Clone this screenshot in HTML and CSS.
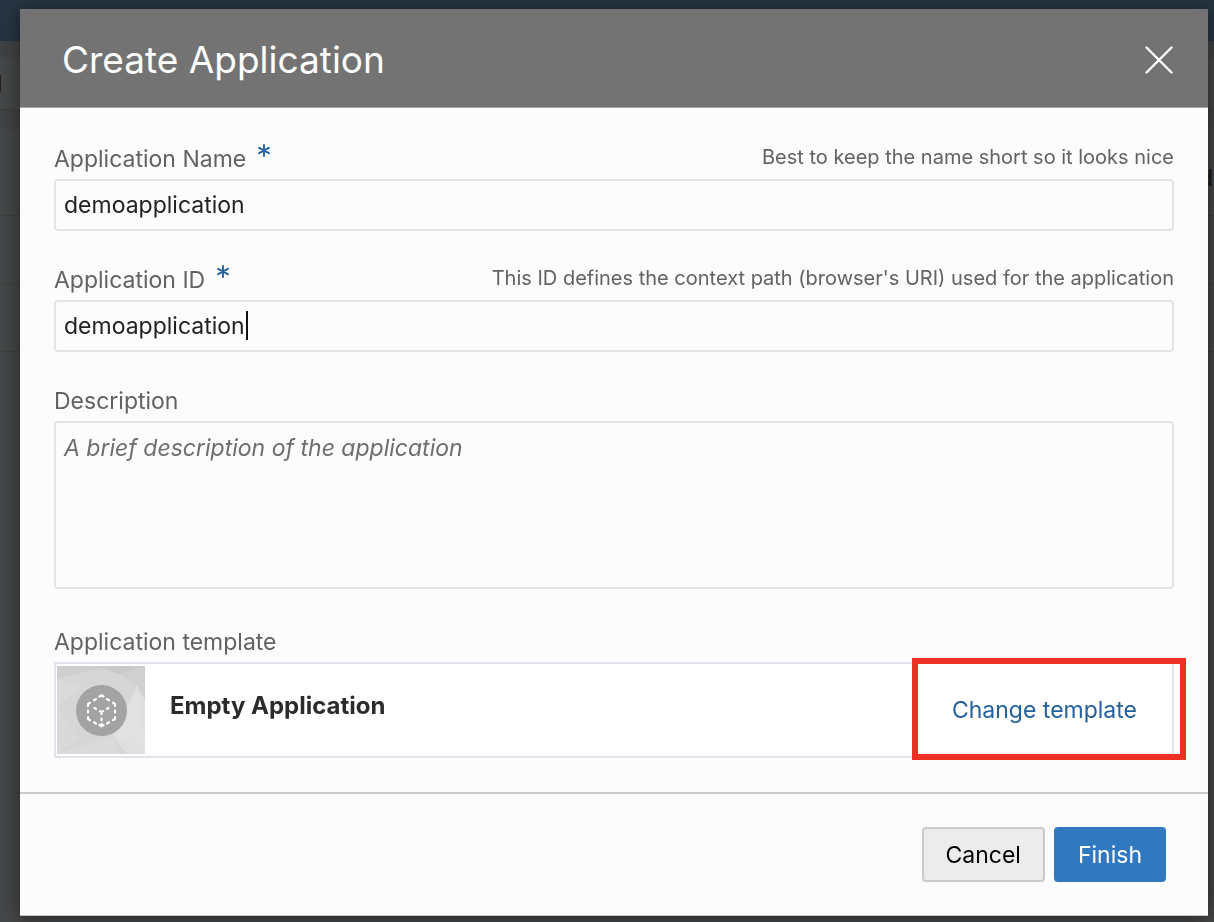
FILE: index.html
```html
<!DOCTYPE html>
<html lang="en">
<head>
<meta charset="utf-8">
<title>Create Application</title>
<link rel="stylesheet" href="styles.css">
</head>
<body>
<div class="backdrop" aria-hidden="true">
  <div class="backdrop-nav"></div>
  <div class="backdrop-toolbar"><span class="backdrop-mark"></span></div>
  <div class="backdrop-strip"></div>
  <div class="backdrop-head">d</div>
  <div class="backdrop-row"></div>
  <div class="backdrop-row"></div>
</div>
<main class="stage">
  <form class="dialog" role="dialog" aria-labelledby="dialog-title">
    <header class="dialog-header">
      <h1 class="dialog-title" id="dialog-title">Create Application</h1>
      <button class="close" type="button" aria-label="Close">
        <svg width="28" height="28" viewBox="0 0 28 28" fill="none" stroke="#fff" stroke-width="2.4" stroke-linecap="round"><path d="M1.5 1.5 26.5 26.5M26.5 1.5 1.5 26.5"/></svg>
      </button>
    </header>
    <div class="dialog-body">
      <div class="field">
        <div class="label-row">
          <label class="label" for="app-name">Application Name</label><span class="required"><svg width="12" height="13" viewBox="0 0 12 13" stroke="#23639f" stroke-width="1.9" stroke-linecap="round"><path d="M6 1v11M1.2 3.8l9.6 5.4M10.8 3.8 1.2 9.2"/></svg></span>
          <span class="hint">Best to keep the name short so it looks nice</span>
        </div>
        <input class="control" id="app-name" type="text" value="demoapplication">
      </div>
      <div class="field">
        <div class="label-row">
          <label class="label" for="app-id">Application ID</label><span class="required"><svg width="12" height="13" viewBox="0 0 12 13" stroke="#23639f" stroke-width="1.9" stroke-linecap="round"><path d="M6 1v11M1.2 3.8l9.6 5.4M10.8 3.8 1.2 9.2"/></svg></span>
          <span class="hint">This ID defines the context path (browser's URI) used for the application</span>
        </div>
        <div class="control-wrap">
          <input class="control" id="app-id" type="text" value="demoapplication">
          <span class="caret"></span>
        </div>
      </div>
      <div class="field">
        <div class="label-row"><label class="label" for="app-desc">Description</label></div>
        <textarea class="control control-area" id="app-desc" placeholder="A brief description of the application"></textarea>
      </div>
      <div class="field field-template">
        <div class="label-row"><span class="label">Application template</span></div>
        <div class="template">
          <svg class="thumb" width="88" height="88" viewBox="0 0 88 88">
            <path fill="#d6d6d6" d="M0 0h88v88H0z"/>
            <path fill="#cecece" d="M0 0h52L0 13z"/>
            <path fill="#c9c9c9" d="M38 0h50v14L62 8z"/>
            <path fill="#dadada" d="M0 13 26 20 0 40z"/>
            <path fill="#d0d0d0" d="M62 8 88 0v34l-8-14z"/>
            <path fill="#d9d9d9" d="M0 40 22 72 0 88z"/>
            <path fill="#dfdfdf" d="M80 20 88 34v54H70L56 70z"/>
            <path fill="#e1e1e1" d="M56 70 80 20l8 60z"/>
            <path fill="#dadada" d="M0 88l56-18 6 18z"/>
            <circle cx="44.500" cy="44.500" r="25.500" fill="#a3a3a3"/>
            <g fill="none" stroke="#fff" stroke-width="2.200" stroke-linecap="round" stroke-linejoin="round">
              <path d="M42.500 30.500 44.500 29.300 46.500 30.500M31 40v-2l2-1.200M58 40v-2l-2-1.200M31 51v2l2 1.200M58 51v2l-2 1.200M42.500 59 44.500 60.200 46.500 59"/>
              <path d="M37 34.300l2-1.200M52 34.300l-2-1.200M31 44.500v2M58 44.500v2M37 56.300l2 1.200M52 56.300l-2 1.200"/>
              <path d="M43 45.200 44.500 46.200 46 45.200M44.500 46.200v2M37.500 42l1.500.9M51.500 42l-1.500.9M44.500 52.500v2M44.500 58v1"/>
            </g>
          </svg>
          <strong class="template-name">Empty Application</strong>
          <button class="change" type="button">Change template</button>
        </div>
      </div>
    </div>
    <footer class="dialog-footer">
      <button class="btn btn-cancel" type="button">Cancel</button>
      <button class="btn btn-finish" type="submit">Finish</button>
    </footer>
  </form>
</main>
</body>
</html>
```
FILE: styles.css
```css
* { box-sizing: border-box; }

body {
  margin: 0;
  background: #464748;
  color: #222;
  font-family: Inter, "Liberation Sans", sans-serif;
  font-size: 23px;
}

button, input, textarea { font: inherit; }

/* Dimmed page behind the dialog */
.backdrop {
  position: fixed;
  inset: 0;
  z-index: -1;
  background: #464748;
  overflow: hidden;
}
.backdrop-nav { height: 41px; background: #273543; }
.backdrop-toolbar {
  height: 68px;
  padding-top: 18px;
  border-top: 16px solid #414243;
}
.backdrop-mark { display: block; width: 1px; height: 17px; background: #222; }
.backdrop-strip { height: 20px; background: #424344; border-top: 2px solid #3f4041; }
.backdrop-head {
  height: 87px;
  padding-right: 1px;
  border-bottom: 1px solid #3f4041;
  color: #222;
  font-weight: 600;
  line-height: 98px;
  text-align: right;
}
.backdrop-row { height: 68px; border-bottom: 1px solid #3f4041; }

.stage { padding: 9px 6px 6px 20px; }

.dialog {
  background: #fcfcfc;
  border-bottom: 1px solid #c4c4c4;
  box-shadow: 0 2px 20px rgba(0, 0, 0, 0.5);
}

.dialog-header {
  display: flex;
  align-items: center;
  justify-content: space-between;
  height: 99px;
  padding: 4px 35px 0 42px;
  background: #737373;
  border-bottom: 1px solid #a5a5a5;
}
.dialog-title {
  margin: 0;
  color: #fff;
  font-size: 37px;
  font-weight: 400;
  line-height: 48px;
}
.close {
  display: flex;
  padding: 0;
  border: 0;
  background: none;
}

.dialog-body {
  display: flex;
  flex-direction: column;
  gap: 32px;
  padding: 34px 34px;
}
.field-template { margin-top: 4px; }
.label-row {
  display: flex;
  align-items: center;
  height: 32px;
  margin-bottom: 5px;
  padding-top: 2px;
}
.label { color: #626262; line-height: 32px; }
.required {
  display: flex;
  align-self: flex-start;
  margin-left: 12px;
}
.hint {
  margin-left: auto;
  color: #626262;
  font-size: 20px;
  line-height: 28px;
  padding-bottom: 4px;
}

.control {
  display: block;
  width: 100%;
  height: 52px;
  padding: 0 8px;
  border: 2px solid #e4e4e4;
  border-radius: 4px;
  background: #fcfcfc;
  color: #222;
  outline: none;
}
.control-wrap { position: relative; }
.caret {
  position: absolute;
  top: 11px;
  left: 192px;
  width: 2px;
  height: 29px;
  background: #111;
}
.control-area {
  height: 168px;
  padding: 9px 8px;
  line-height: 32px;
  resize: none;
}
.control-area::placeholder { color: #6d6d6d; font-style: italic; opacity: 1; }

.template {
  display: flex;
  height: 96px;
  padding: 2px 1px;
  border: 2px solid #dfe4ea;
  background: #fff;
}
.thumb { flex: none; }
.template-name {
  margin-left: 25px;
  padding-top: 24px;
  color: #2b2b2b;
  font-size: 24px;
  font-weight: 700;
  line-height: 32px;
}
.change {
  position: relative;
  margin-left: auto;
  padding: 0 34px;
  border: 0;
  background: none;
  color: #23609c;
}
/* Callout frame around the link */
.change::after {
  content: "";
  position: absolute;
  inset: -8px -15px -6px -6px;
  border: 6px solid #ee3124;
}

.dialog-footer {
  display: flex;
  justify-content: flex-end;
  gap: 9px;
  padding: 33px 42px 33px;
  border-top: 2px solid #cacaca;
}
.btn {
  height: 55px;
  padding: 0 22px;
  border: 2px solid #cacaca;
  border-radius: 4px;
  background: #ececec;
  color: #000;
}
.btn-finish { border-color: #3079c0; background: #3079c0; color: #fff; }
```
